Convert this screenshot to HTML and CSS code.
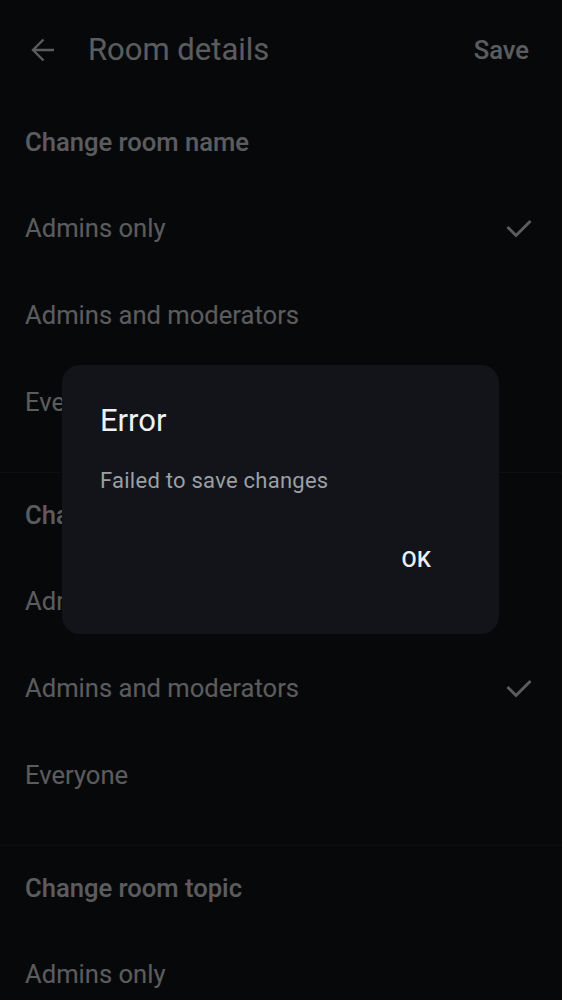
FILE: index.html
```html
<!DOCTYPE html>
<html lang="en">
<head>
<meta charset="utf-8">
<title>Room details</title>
<link rel="stylesheet" href="styles.css">
</head>
<body>
<div class="screen">
  <header class="topbar">
    <button class="icon-btn" aria-label="Back">
      <svg width="26" height="26" viewBox="0 0 26 26"><path d="M24 13H3M13.5 2.5L3 13l10.5 10.5" fill="none" stroke="currentColor" stroke-width="2.4" stroke-linecap="butt" stroke-linejoin="miter"/></svg>
    </button>
    <h1 class="title">Room details</h1>
    <button class="text-btn">Save</button>
  </header>

  <section class="section">
    <h2 class="section-title">Change room name</h2>
    <div class="item"><span>Admins only</span><svg class="check" width="26" height="20" viewBox="0 0 26 20"><path d="M1.5 9l8.5 8.5L24.5 3" fill="none" stroke="currentColor" stroke-width="3"/></svg></div>
    <div class="item"><span>Admins and moderators</span></div>
    <div class="item"><span>Everyone</span></div>
  </section>
  <section class="section">
    <h2 class="section-title">Change room avatar</h2>
    <div class="item"><span>Admins only</span></div>
    <div class="item"><span>Admins and moderators</span><svg class="check" width="26" height="20" viewBox="0 0 26 20"><path d="M1.5 9l8.5 8.5L24.5 3" fill="none" stroke="currentColor" stroke-width="3"/></svg></div>
    <div class="item"><span>Everyone</span></div>
  </section>
  <section class="section">
    <h2 class="section-title">Change room topic</h2>
    <div class="item"><span>Admins only</span></div>
    <div class="item"><span>Admins and moderators</span></div>
    <div class="item"><span>Everyone</span></div>
  </section>
</div>

<div class="scrim"></div>

<div class="dialog" role="alertdialog">
  <h3 class="dialog-title">Error</h3>
  <p class="dialog-text">Failed to save changes</p>
  <div class="dialog-actions">
    <button class="dialog-btn">OK</button>
  </div>
</div>
</body>
</html>
```

FILE: styles.css
```css
* { box-sizing: border-box; }

html, body {
  margin: 0;
  padding: 0;
  height: 1000px;
  overflow: hidden;
  background: #12141a;
}

body {
  font-family: Roboto, "Noto Sans", sans-serif;
  color: #e4e6ea;
}

button {
  font-family: inherit;
  background: none;
  border: 0;
  padding: 0;
  color: inherit;
  cursor: pointer;
}

.screen {
  background: #12141a;
}

.topbar {
  height: 100px;
  display: flex;
  align-items: center;
  padding: 0 33px 0 30px;
}

.icon-btn {
  width: 26px;
  height: 26px;
  display: flex;
  align-items: center;
  justify-content: center;
  color: #e4e6ea;
  margin-right: 32px;
}

.icon-btn svg { display: block; }

.title {
  flex: 1;
  margin: 0;
  font-size: 31px;
  font-weight: 400;
  line-height: 40px;
  color: #e4e6ea;
}

.text-btn {
  font-size: 25.6px;
  font-weight: 500;
  line-height: 40px;
  color: #e4e6ea;
}

.section {
  padding: 0 30px 27px 25px;
  border-bottom: 1px solid #24272e;
}

.section-title {
  margin: 0;
  height: 84px;
  display: flex;
  align-items: center;
  font-size: 25.6px;
  font-weight: 500;
  color: #e4e6ea;
}

.item {
  height: 87px;
  display: flex;
  align-items: center;
  justify-content: space-between;
  font-size: 25.6px;
  font-weight: 400;
  color: #e4e6ea;
}

.check {
  display: block;
  color: #e4e6ea;
  margin-top: 1px;
}

.scrim {
  position: fixed;
  inset: 0;
  background: rgba(0, 0, 0, 0.6);
}

.dialog {
  position: fixed;
  left: 62px;
  top: 365px;
  width: 437px;
  height: 269px;
  background: #121419;
  border-radius: 18px;
  padding: 36px 38px 0 38px;
  display: flex;
  flex-direction: column;
}

.dialog-title {
  margin: 0;
  font-size: 31px;
  font-weight: 400;
  line-height: 40px;
  color: #eef0f3;
}

.dialog-text {
  margin: 24px 0 0;
  font-size: 22px;
  line-height: 32px;
  letter-spacing: 0.25px;
  color: #9b9fa6;
}

.dialog-actions {
  margin-top: 30px;
  display: flex;
  justify-content: flex-end;
  padding-right: 10px;
}

.dialog-btn {
  height: 64px;
  padding: 0 20px;
  font-size: 22px;
  font-weight: 500;
  letter-spacing: 0.2px;
  color: #eceef2;
}
```
